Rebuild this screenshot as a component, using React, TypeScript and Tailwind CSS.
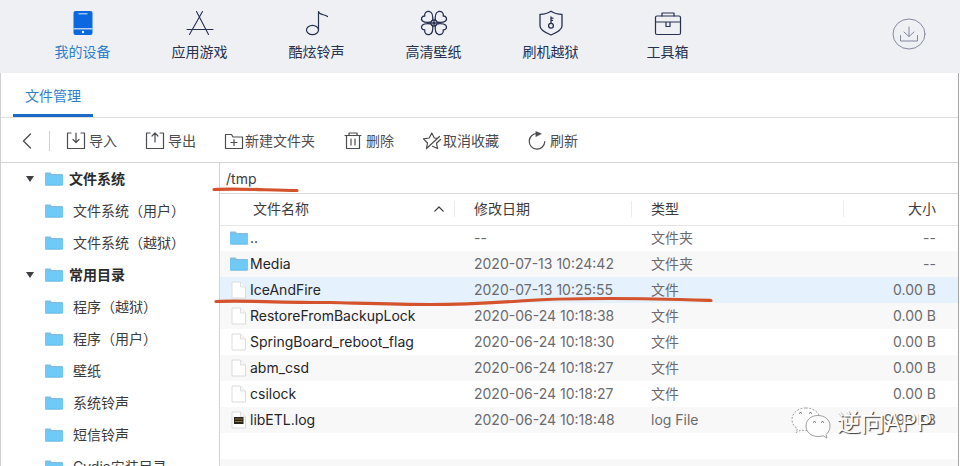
import type { ReactNode } from "react";

const line = {
  fill: "none",
  stroke: "currentColor",
  strokeLinecap: "round" as const,
  strokeLinejoin: "round" as const,
};

function DeviceIcon() {
  return (
    <svg width="28" height="26" viewBox="0 0 28 26">
      <rect x="4.500" y="1" width="19" height="24" rx="2" fill="#0b68de" />
      <path d="M9.500 3.800h9" stroke="#dbe9fb" strokeWidth="1" />
      <path d="M4.500 18.800h19" stroke="#dbe9fb" strokeWidth="1.2" />
      <circle cx="14" cy="22" r="1.2" fill="#eef1f5" />
    </svg>
  );
}

function AppsIcon() {
  return (
    <svg width="28" height="26" viewBox="0 0 28 26" {...line} strokeWidth="1.1">
      <path d="M10.500 1.500 22.500 24.500M16.500 1.500 3.500 24.500M1 19.500H27" />
    </svg>
  );
}

function MusicIcon() {
  return (
    <svg width="28" height="26" viewBox="0 0 28 26" {...line} strokeWidth="1.2">
      <ellipse cx="9.500" cy="20" rx="6" ry="4.700" />
      <path d="M15.500 20V1.500c1 4 6 2.500 9 5" />
    </svg>
  );
}

function CloverIcon() {
  const petal =
    "M12.500 12C9 12.500 4.500 12.800 2.500 11C.5 9 1.500 6 4.800 6C4 3 6.500 .8 9.500 1.500C13 2.500 13 8.500 12.500 12Z";
  return (
    <svg width="28" height="26" viewBox="0 0 28 26" {...line} strokeWidth="1.300">
      <path d={petal} />
      <path d={petal} transform="matrix(-1 0 0 1 28 0)" />
      <path d={petal} transform="matrix(1 0 0 -1 0 26)" />
      <path d={petal} transform="matrix(-1 0 0 -1 28 26)" />
      <circle cx="14" cy="13" r="3" fill="#eef0f4" />
      <circle cx="14" cy="13" r="1.2" fill="currentColor" />
    </svg>
  );
}

function ShieldIcon() {
  return (
    <svg width="28" height="26" viewBox="0 0 28 26" {...line} strokeWidth="1.3">
      <path d="M14 1.200C11 3.200 7 4.200 3 4.300V16c0 4.500 6 7 11 9c5-2 11-4.500 11-9V4.300C21 4.200 17 3.200 14 1.200Z" />
      <circle cx="14" cy="15.800" r="2.400" />
      <path d="M14 13.400V7M14 8.200h2M14 10.400h1.500" />
    </svg>
  );
}

function ToolboxIcon() {
  return (
    <svg width="28" height="26" viewBox="0 0 28 26" {...line} strokeWidth="1.2">
      <rect x="1.500" y="6" width="25" height="18.500" rx="1.500" />
      <path d="M8 6V3h12v3M1.500 12h25M12 12v4.500h4V12" />
    </svg>
  );
}

function FolderIcon() {
  return (
    <svg className="shrink-0" width="18" height="14" viewBox="0 0 18 14" aria-hidden="true">
      <path d="M0 1.500Q0 .5 1 .5H5.500L7 2H17Q18 2 18 3V6H0Z" fill="#7fbfe6" />
      <path d="M0 4Q0 3.500.8 3.500H17.200Q18 3.500 18 4.200V12.500Q18 13.500 17 13.500H1Q0 13.500 0 12.500Z" fill="#6fcaf8" />
      <path d="M.5 13.200h17" stroke="#5cacd8" strokeWidth=".6" />
    </svg>
  );
}

function FileIcon({ log = false }: { log?: boolean }) {
  return (
    <svg className="shrink-0" width="18" height="18" viewBox="0 0 18 18" aria-hidden="true">
      <path d="M2 1H10.500L15.500 6V17H2Z" fill="#fff" stroke="#d8d8da" strokeWidth=".9" />
      <path d="M10.500 1V6H15.500" fill="#f6f6f6" stroke="#d8d8da" strokeWidth=".8" />
      {log && (
        <>
          <rect x="4" y="6" width="9.500" height="7" fill="#28231b" />
          <path d="M5 8h7.500M5 10.500h7.500" stroke="#8a7838" strokeWidth="1" />
        </>
      )}
    </svg>
  );
}

function ToolIcon({ children }: { children: ReactNode }) {
  return (
    <svg width="20" height="20" viewBox="0 0 20 20" {...line} strokeWidth="1.2" aria-hidden="true">
      {children}
    </svg>
  );
}

const navItems = [
  { label: "我的设备", icon: <DeviceIcon />, active: true },
  { label: "应用游戏", icon: <AppsIcon /> },
  { label: "酷炫铃声", icon: <MusicIcon /> },
  { label: "高清壁纸", icon: <CloverIcon /> },
  { label: "刷机越狱", icon: <ShieldIcon /> },
  { label: "工具箱", icon: <ToolboxIcon /> },
];

const tools = [
  {
    label: "导入",
    space: "gap-[3px]",
    icon: (
      <ToolIcon>
        <path d="M5 2H1.500V17.500H18.500V2H15M10 2v9M7 8.500 10 11.500l3-3" />
      </ToolIcon>
    ),
  },
  {
    label: "导出",
    space: "gap-[3px]",
    icon: (
      <ToolIcon>
        <path d="M5 2H1.500V17.500H18.500V2H15M10 11V2M7 5 10 2l3 3" />
      </ToolIcon>
    ),
  },
  {
    label: "新建文件夹",
    space: "gap-px",
    icon: (
      <ToolIcon>
        <path d="M1.500 17.500V3.500H7.500L9 6H18.500V17.500ZM10 8.500v6M7 11.500h6" />
      </ToolIcon>
    ),
  },
  {
    label: "删除",
    space: "gap-[3px]",
    icon: (
      <ToolIcon>
        <path d="M2 4.500H18M6 4.500V2H14V4.500M3.500 4.500V17.500H16.500V4.500M8 8v6M12 8v6" />
      </ToolIcon>
    ),
  },
  {
    label: "取消收藏",
    space: "gap-px",
    icon: (
      <ToolIcon>
        <path d="M4.500 17.500 5.500 12 1.500 7.800 7.200 7 9.800 2 12.300 7 15 7.300M18.500 8.500 14.500 12.200 15.500 17.500 10.500 15.200M4.500 17.500 17.500 5.500" />
      </ToolIcon>
    ),
  },
  {
    label: "刷新",
    space: "gap-[3px]",
    icon: (
      <ToolIcon>
        <path d="M10.500 2.500A7.800 7.800 0 1 0 17.800 10.500" />
        <path d="M9 .5 14.500 2.800 9 5.500Z" fill="currentColor" strokeWidth=".5" />
      </ToolIcon>
    ),
  },
];

const tree = [
  { title: "文件系统", items: ["文件系统（用户）", "文件系统（越狱）"] },
  {
    title: "常用目录",
    items: ["程序（越狱）", "程序（用户）", "壁纸", "系统铃声", "短信铃声", "Cydia安装目录"],
  },
];

const files = [
  { name: "..", date: "--", type: "文件夹", size: "--", kind: "folder" },
  { name: "Media", date: "2020-07-13 10:24:42", type: "文件夹", size: "--", kind: "folder" },
  { name: "IceAndFire", date: "2020-07-13 10:25:55", type: "文件", size: "0.00 B", kind: "file", selected: true },
  { name: "RestoreFromBackupLock", date: "2020-06-24 10:18:38", type: "文件", size: "0.00 B", kind: "file" },
  { name: "SpringBoard_reboot_flag", date: "2020-06-24 10:18:30", type: "文件", size: "0.00 B", kind: "file" },
  { name: "abm_csd", date: "2020-06-24 10:18:27", type: "文件", size: "0.00 B", kind: "file" },
  { name: "csilock", date: "2020-06-24 10:18:27", type: "文件", size: "0.00 B", kind: "file" },
  { name: "libETL.log", date: "2020-06-24 10:18:48", type: "log File", size: "9.93 KB", kind: "log" },
];

function TopBar() {
  return (
    <header className="flex h-[73px] shrink-0 items-start bg-[#eef0f4] pl-6 pr-[34px]">
      <nav className="flex flex-1 pt-2.5">
        {navItems.map((item) => (
          <button
            key={item.label}
            type="button"
            className={`flex w-[117px] flex-col items-center gap-1 ${item.active ? "text-[#2f7fcb]" : "text-[#26304f]"}`}
          >
            {item.icon}
            <span className="leading-6">{item.label}</span>
          </button>
        ))}
      </nav>
      <button type="button" aria-label="下载" className="mt-[17px] text-[#8389a0]">
        <svg width="34" height="34" viewBox="0 0 34 34" {...line} strokeWidth="1">
          <ellipse cx="17" cy="17" rx="16" ry="15" />
          <path d="M17 10v9.500M12 15l5 4.500 5-4.500M8.500 18.500V24h17v-5.500" />
        </svg>
      </button>
    </header>
  );
}

function Toolbar() {
  return (
    <div className="flex h-[45px] shrink-0 items-center border-b border-[#d4d4d6] pl-5 pt-px text-[#4c4c50]">
      <button type="button" aria-label="返回">
        <svg width="14" height="18" viewBox="0 0 14 18" {...line} strokeWidth="1.3">
          <path d="M9.500 2 2.500 9l7 7" />
        </svg>
      </button>
      <span className="ml-3.5 mr-4 h-5 w-px bg-[#cfcfd2]" />
      <div className="flex gap-7">
        {tools.map((tool) => (
          <button key={tool.label} type="button" className={`flex items-center ${tool.space}`}>
            {tool.icon}
            {tool.label}
          </button>
        ))}
      </div>
    </div>
  );
}

function Sidebar() {
  return (
    <aside className="w-[219px] shrink-0 overflow-hidden border-r border-[#d4d4d6] pl-6 text-[#3c3c40]">
      {tree.map((group) => (
        <section key={group.title}>
          <button type="button" className="flex h-8 items-center font-bold text-[#2b2b2e]">
            <svg className="mr-2.5" width="10" height="8" viewBox="0 0 10 8" aria-hidden="true">
              <path d="M1 1h8L5 7Z" fill="#3f3f43" />
            </svg>
            <FolderIcon />
            <span className="ml-1.5">{group.title}</span>
          </button>
          <ul className="pl-5">
            {group.items.map((item) => (
              <li key={item} className="flex h-8 items-center gap-2.5">
                <FolderIcon />
                {item}
              </li>
            ))}
          </ul>
        </section>
      ))}
    </aside>
  );
}

function FileTable() {
  return (
    <table className="w-full table-fixed border-collapse text-left">
      <colgroup>
        <col className="w-[235px]" />
        <col className="w-[177px]" />
        <col className="w-[212px]" />
        <col />
      </colgroup>
      <thead>
        <tr className="h-[31px] border-b border-[#e6e6e8] text-[#3c3c40]">
          <th className="pl-[33px] font-normal">
            <div className="flex h-4 items-center justify-between border-r border-[#ececee] pr-2.5">
              文件名称
              <svg width="10" height="6" viewBox="0 0 10 6" {...line} strokeWidth="1.2">
                <path d="M.8 5.200 5 1l4.200 4.200" />
              </svg>
            </div>
          </th>
          <th className="pl-[19px] font-normal">
            <div className="flex h-4 items-center border-r border-[#ececee]">修改日期</div>
          </th>
          <th className="pl-[19px] font-normal">
            <div className="flex h-4 items-center border-r border-[#ececee]">类型</div>
          </th>
          <th className="pr-[22px] text-right font-normal">大小</th>
        </tr>
      </thead>
      <tbody className="text-[#6b6b6f]">
        {files.map((file) => (
          <tr key={file.name} className={`h-[26px] ${file.selected ? "bg-[#e5f1fd]" : "even:bg-[#f8f8f9]"}`}>
            <td className="pl-2.5 text-[#252528]">
              <div className="flex items-center gap-0.5">
                {file.kind === "folder" ? <FolderIcon /> : <FileIcon log={file.kind === "log"} />}
                {file.name}
              </div>
            </td>
            <td className="pl-[19px]">{file.date}</td>
            <td className="pl-[19px]">{file.type}</td>
            <td className="pr-[22px] text-right">{file.size}</td>
          </tr>
        ))}
        <tr className="h-[26px]">
          <td colSpan={4} />
        </tr>
        <tr className="h-[26px] bg-[#f8f8f9]">
          <td colSpan={4} />
        </tr>
      </tbody>
    </table>
  );
}

function PenMarks() {
  return (
    <svg
      className="pointer-events-none absolute left-0 top-0"
      width="960"
      height="466"
      viewBox="0 0 960 466"
      fill="none"
      stroke="#d4532c"
      strokeWidth="3.200"
      strokeLinecap="round"
      aria-hidden="true"
    >
      <path d="M214 189.500C240 188 270 190.500 297 190.500" />
      <path d="M216 301.500C240 300 270 302.500 330 302.500C370 303.500 400 304.500 430 304.500C460 304.500 490 303 520 301C550 298.500 580 298.500 610 298.500C650 298.500 680 299.500 711 300.500" />
    </svg>
  );
}

function Watermark() {
  return (
    <div className="pointer-events-none absolute bottom-[26px] right-7 flex items-center gap-1.5">
      <svg width="40" height="34" viewBox="0 0 40 34" fill="#fdfdfd" stroke="#88888b" strokeWidth=".8" aria-hidden="true">
        <path
          d="M15 2C7 2 1 7 1 13.500c0 4 2 7 5.500 9L5 26.500l5-2.500c6 1.500 19 0 19-10.500C29 7 23 2 15 2Z"
          strokeDasharray="2 1.500"
        />
        <path d="M27 9.500c-7 0-12 4.500-12 10.500s5 10.500 12 10.500c2 0 3.500-.3 5-.8l4 2.300-1-3.500c2.500-2 4-5 4-8.500 0-6-5-10.500-12-10.500Z" />
        <path d="M8 7.500q1.500-2 3 0M18 7.500q1.500-2 3 0M22 16.500q1.500-2 3 0M30 16.500q1.500-2 3 0" fill="none" stroke="#444447" />
      </svg>
      <span className="text-[24px] leading-8 text-white [text-shadow:1px_1px_1px_#333]">逆向APP</span>
    </div>
  );
}

export default function App() {
  return (
    <div className="relative flex h-screen flex-col overflow-hidden bg-white font-['Inter','Noto_Sans_CJK_SC',sans-serif] text-[14px] leading-5">
      <TopBar />
      <main className="mr-px flex min-h-0 flex-1 flex-col border-l border-r border-l-[#d0d0d3] border-r-[#a5a5a8]">
        <div className="flex h-[45px] shrink-0 border-b border-[#dedee0] pl-3">
          <button type="button" className="w-20 border-b-[3px] border-[#1c6ac8] pt-1 text-[#2f7fcb]">
            文件管理
          </button>
        </div>
        <Toolbar />
        <div className="flex min-h-0 flex-1">
          <Sidebar />
          <div className="min-w-0 flex-1 overflow-hidden">
            <input
              aria-label="路径"
              defaultValue="/tmp"
              className="block h-[31px] w-full border-b border-[#d9d9db] pl-1.5 text-[#3c3c40] outline-none"
            />
            <FileTable />
          </div>
        </div>
      </main>
      <Watermark />
      <PenMarks />
    </div>
  );
}
